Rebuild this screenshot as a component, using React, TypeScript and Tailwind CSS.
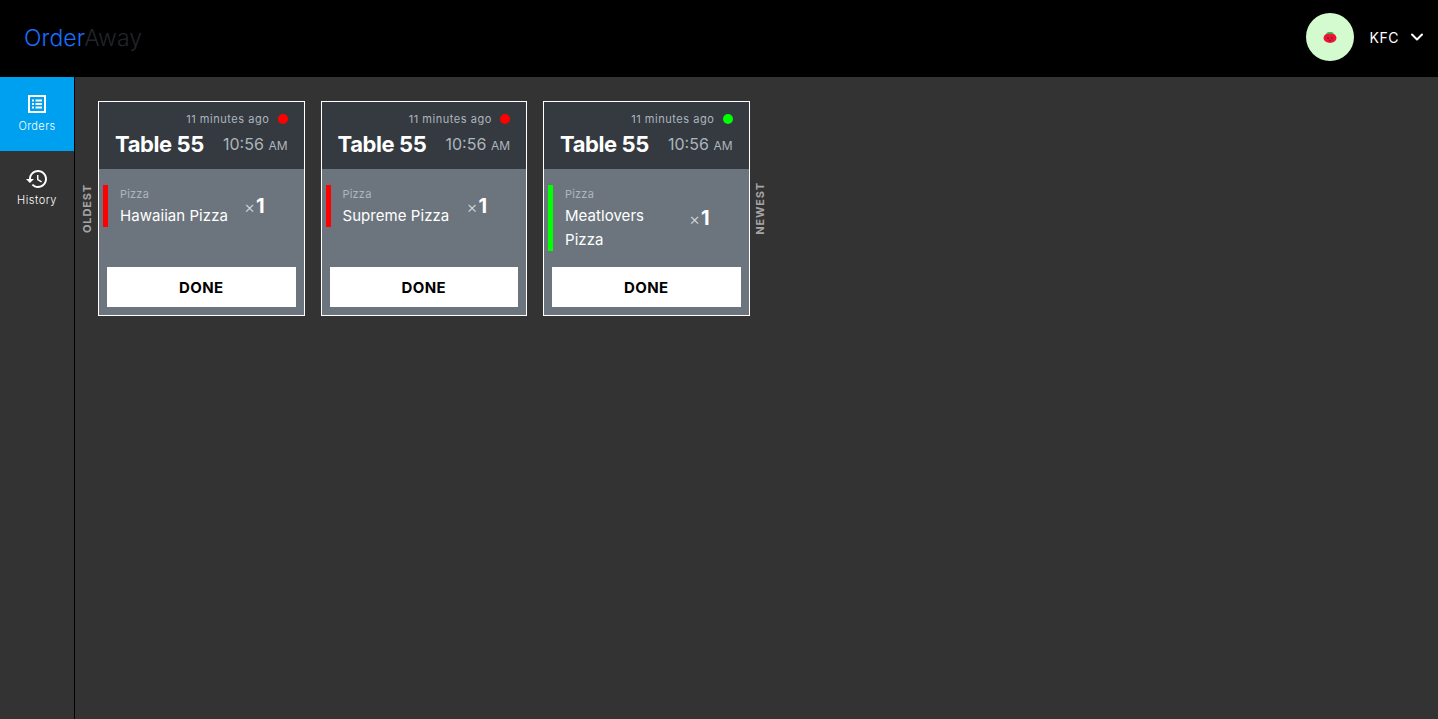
import React from 'react';
import { ChevronDown } from 'lucide-react';

interface Order {
  id: number;
  name: string[];
  color: string;
}

const orders: Order[] = [
  { id: 1, name: ['Hawaiian Pizza'], color: 'bg-[#ff0000]' },
  { id: 2, name: ['Supreme Pizza'], color: 'bg-[#ff0000]' },
  { id: 3, name: ['Meatlovers', 'Pizza'], color: 'bg-[#00ff00]' },
];

const OrdersIcon = () => (
  <svg width="18" height="18" viewBox="0 0 18 18" fill="none">
    <rect x="1" y="1" width="16" height="16" stroke="white" strokeWidth="2" />
    <rect x="4" y="4.5" width="2" height="2" fill="white" />
    <rect x="4" y="8" width="2" height="2" fill="white" />
    <rect x="4" y="11.5" width="2" height="2" fill="white" />
    <rect x="7.5" y="4.5" width="6.5" height="2" fill="white" />
    <rect x="7.5" y="8" width="6.5" height="2" fill="white" />
    <rect x="7.5" y="11.5" width="6.5" height="2" fill="white" />
  </svg>
);

const HistoryIcon = () => (
  <svg width="24" height="24" viewBox="0 0 24 24" fill="white">
    <path d="M13 3c-4.97 0-9 4.03-9 9H1l3.89 3.89.07.14L9 12H6c0-3.87 3.13-7 7-7s7 3.13 7 7-3.13 7-7 7c-1.93 0-3.68-.79-4.94-2.06l-1.42 1.42C8.27 19.99 10.51 21 13 21c4.97 0 9-4.03 9-9s-4.03-9-9-9zm-1 5v5l4.28 2.54.72-1.21-3.5-2.08V8H12z" />
  </svg>
);

const Tomato = () => (
  <svg width="14" height="14" viewBox="0 0 14 14">
    <ellipse cx="7" cy="8" rx="6.5" ry="5" fill="#e8173a" />
    <path d="M3 3.2 C5 1.5 9 1.5 11 3.2 C9 4 5 4 3 3.2Z" fill="#3cb54a" />
    <circle cx="5" cy="8" r="0.7" fill="#5a0a18" />
    <circle cx="9" cy="8" r="0.7" fill="#5a0a18" />
    <path d="M5.5 10 Q7 11 8.5 10" stroke="#5a0a18" strokeWidth="0.6" fill="none" />
  </svg>
);

const SideLabel = ({ text, className }: { text: string; className?: string }) => (
  <div className={`w-[23px] flex justify-center ${className ?? ''}`}>
    <span className="[writing-mode:vertical-rl] rotate-180 text-[11px] leading-[12px] font-bold tracking-[0.85px] text-[#a5a5a5]">
      {text}
    </span>
  </div>
);

const OrderCard = ({ order }: { order: Order }) => (
  <div className="w-[206.5px] h-[215px] border border-white flex flex-col bg-[#6c757d]">
    <div className="h-[67px] bg-[#343a40] px-4 pt-[8px]">
      <div className="flex items-center justify-end h-[18px] text-[11px] tracking-[0.55px] text-[#adb5bd]">
        <span>11 minutes ago</span>
        <span className={`ml-2 w-[10px] h-[10px] rounded-full ${order.color}`} />
      </div>
      <div className="flex items-center justify-between mt-[2px] h-[28px]">
        <span className="text-[22px] font-bold tracking-[-0.4px] text-white">Table 55</span>
        <span className="text-[16px] text-[#adb5bd]">
          10:56 <span className="text-[12px]">AM</span>
        </span>
      </div>
    </div>
    <div className="flex-1 flex flex-col px-1 pt-4 pb-2">
      <div className="flex-1 flex items-start">
        <div className={`w-[5px] mr-3 ${order.color} ${order.name.length > 1 ? 'h-[66px]' : 'h-[42px]'}`} />
        <div className="w-[125px]">
          <div className="text-[11px] leading-[18px] tracking-[0.2px] text-[#adb5bd]">Pizza</div>
          <div className="mt-[1px] text-[15px] leading-[24px] tracking-[0.05px] text-white">
            {order.name.map((line) => (
              <div key={line}>{line}</div>
            ))}
          </div>
        </div>
        <div className={`-ml-[1px] flex items-baseline text-white ${order.name.length > 1 ? 'mt-[21px]' : 'mt-[9px]'}`}>
          <span className="text-[17px] font-light text-[#d5d8db]">×</span>
          <span className="ml-[1px] text-[20px] font-bold leading-[24px]">1</span>
        </div>
      </div>
      <button className="mx-1 h-10 pt-[2px] bg-white text-black text-[15px] font-bold tracking-[0.35px]">DONE</button>
    </div>
  </div>
);

export default function App() {
  return (
    <div className="h-[719px] flex flex-col bg-[#333333] font-['Inter',sans-serif] overflow-hidden">
      <header className="h-[77px] bg-black flex items-start justify-between pl-6 pr-[11px] shrink-0">
        <div className="mt-[24px] text-[23px] leading-[28px] font-light tracking-[0.05px]">
          <span className="text-[#1a6dff]">Order</span>
          <span className="text-[#212529]">Away</span>
        </div>
        <div className="mt-[13px] flex items-center text-white">
          <div className="w-12 h-12 rounded-full bg-[#d4fbd0] flex items-center justify-center">
            <Tomato />
          </div>
          <span className="ml-4 text-[14px] tracking-[0.5px]">KFC</span>
          <ChevronDown size={20} strokeWidth={2.4} className="ml-[8px]" />
        </div>
      </header>
      <div className="flex-1 flex">
        <nav className="w-[75px] border-r border-black shrink-0">
          <div className="h-[74px] bg-[#00a0f0] flex flex-col items-center justify-center text-white">
            <OrdersIcon />
            <span className="mt-[6px] text-[11px] font-light tracking-[0.4px] leading-[14px]">Orders</span>
          </div>
          <div className="h-[74px] pb-[2px] flex flex-col items-center justify-center text-white">
            <HistoryIcon />
            <span className="mt-[2px] text-[11px] font-light tracking-[0.5px] leading-[14px]">History</span>
          </div>
        </nav>
        <main className="flex-1 pt-6">
          <div className="flex items-center">
            <SideLabel text="OLDEST" />
            <div className="flex gap-4">
              {orders.map((order) => (
                <OrderCard key={order.id} order={order} />
              ))}
            </div>
            <SideLabel text="NEWEST" className="pr-[3px]" />
          </div>
        </main>
      </div>
    </div>
  );
}
